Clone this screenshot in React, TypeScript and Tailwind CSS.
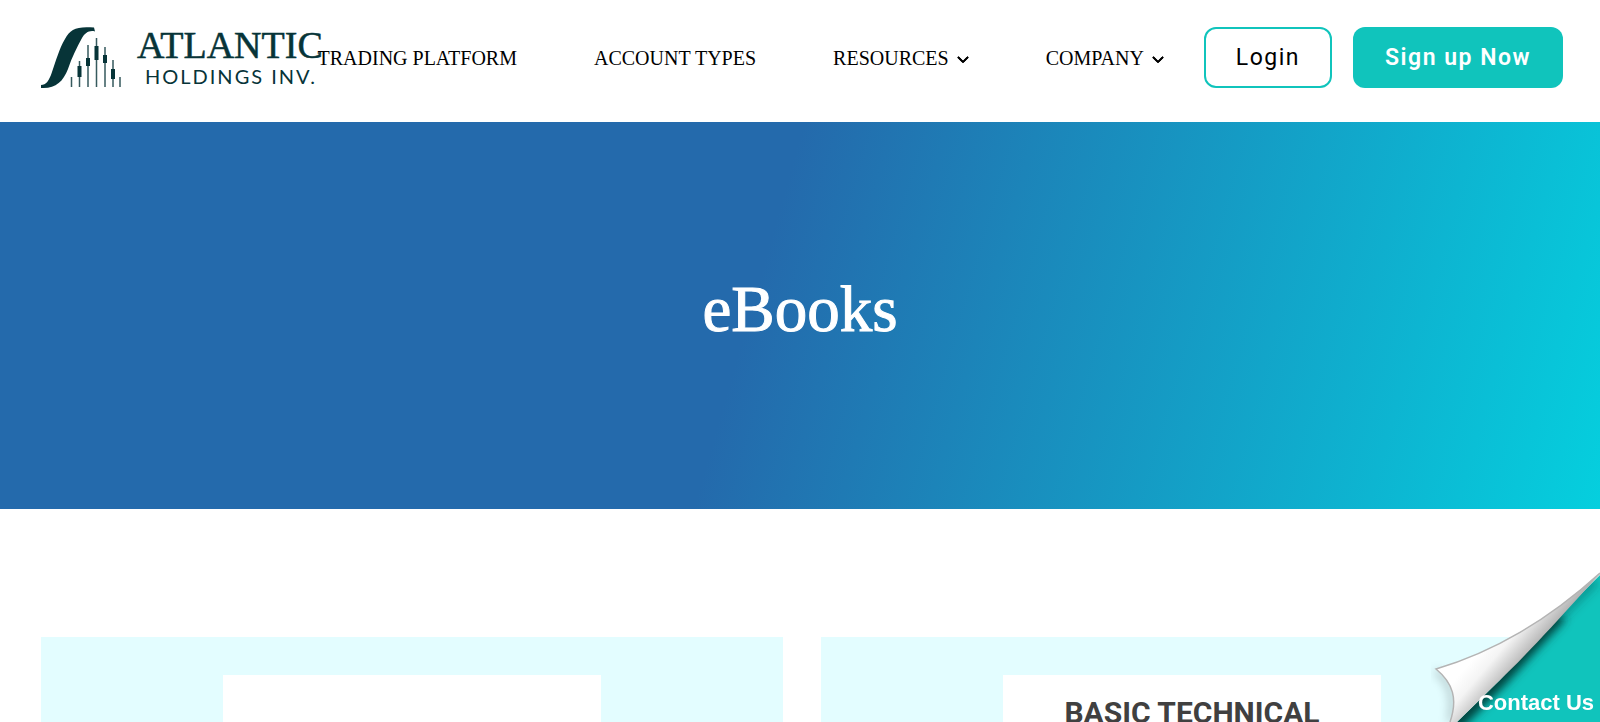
import { FaChevronDown } from "react-icons/fa6";

const navItems = [
  { label: "TRADING PLATFORM", menu: false },
  { label: "ACCOUNT TYPES", menu: false },
  { label: "RESOURCES", menu: true },
  { label: "COMPANY", menu: true },
];

const books = [
  { id: 1, title: "" },
  { id: 2, title: "BASIC TECHNICAL" },
];

function LogoMark() {
  return (
    <svg
      width="80"
      height="62"
      viewBox="0 0 80 62"
      className="shrink-0"
      aria-hidden="true"
    >
      <path
        d="M54 4.500C48 3 44 6 41 11C36 20 31 30 27 42C22 55 14 62 0 61V58C5 58 8 54 11 45C15 34 18 22 24 12C29 2 36 -1 53 0.500Z"
        fill="#073438"
      />
      <path
        d="M30.500 50V60M38.500 34V60M47 18V60M55.500 11V60M64 20V60M72 33V60M79 50V60"
        stroke="#365a5e"
        strokeWidth="1.500"
      />
      <g fill="#073438">
        <rect x="36.500" y="39" width="4" height="11" />
        <rect x="45" y="31" width="4" height="8" />
        <rect x="53.500" y="19" width="4" height="14" />
        <rect x="62" y="28" width="4" height="8" />
        <rect x="70" y="42" width="4" height="10" />
      </g>
    </svg>
  );
}

function Logo() {
  return (
    <a href="#" className="flex w-[270px] shrink-0 gap-4 text-[#073438]">
      <LogoMark />
      <span className="flex flex-col whitespace-nowrap">
        <span className="font-['Liberation_Serif',serif] text-[38px] leading-9 [-webkit-text-stroke:0.5px]">
          ATLANTIC
        </span>
        <span className="pl-2 font-['Lato',sans-serif] text-xl leading-[26px] tracking-widest">
          HOLDINGS INV.
        </span>
      </span>
    </a>
  );
}

function Header() {
  return (
    <header className="flex h-[122px] items-start pt-[27px] pr-[37px] pl-[41px]">
      <Logo />
      <nav className="ml-auto flex h-[61px] items-center gap-[77px] font-['Liberation_Serif',serif] text-xl text-black">
        {navItems.map((item) => (
          <a
            key={item.label}
            href="#"
            className="flex items-center gap-2 whitespace-nowrap"
          >
            {item.label}
            {item.menu && (
              <FaChevronDown className="mt-0.5 size-3 stroke-current stroke-[40]" />
            )}
          </a>
        ))}
      </nav>
      <div className="ml-10 flex gap-[21px] font-['Roboto',sans-serif] text-[23px] tracking-[1.5px] whitespace-nowrap">
        <button
          type="button"
          className="h-[61px] rounded-xl border-2 border-[#10c4bc] px-[30px] pt-px text-black"
        >
          Login
        </button>
        <button
          type="button"
          className="h-[61px] rounded-xl bg-[#10c4bc] px-8 pt-px font-semibold text-white"
        >
          Sign up Now
        </button>
      </div>
    </header>
  );
}

function ContactCorner() {
  return (
    <a
      href="#"
      className="fixed right-0 bottom-0 block h-[150px] w-[170px] overflow-hidden"
    >
      <svg width="170" height="150" viewBox="0 0 170 150" aria-hidden="true">
        <defs>
          <linearGradient
            id="paper"
            gradientUnits="userSpaceOnUse"
            x1="42"
            y1="88"
            x2="76"
            y2="117"
          >
            <stop offset="0" stopColor="#ffffff" />
            <stop offset="0.35" stopColor="#f4f4f4" />
            <stop offset="1" stopColor="#a8a8a8" />
          </linearGradient>
          <filter id="soft" x="-30%" y="-30%" width="160%" height="160%">
            <feGaussianBlur stdDeviation="5" />
          </filter>
          <clipPath id="under">
            <path d="M170 3L120 53L70 108L27 150H170Z" />
          </clipPath>
        </defs>
        <path
          d="M6 99C18 108 26 122 20 150"
          fill="none"
          stroke="#000000"
          strokeOpacity="0.25"
          strokeWidth="5"
          filter="url(#soft)"
        />
        <path d="M170 3L120 53L70 108L27 150H170Z" fill="#10c4bc" />
        <g clipPath="url(#under)">
          <path
            d="M130 43L100 75L70 108L20 158"
            fill="none"
            stroke="#003c38"
            strokeWidth="14"
            filter="url(#soft)"
          />
          <path
            d="M165 8L130 43"
            fill="none"
            stroke="#003c38"
            strokeOpacity="0.35"
            strokeWidth="10"
            filter="url(#soft)"
          />
        </g>
        <path
          d="M170 2C145 29 98 82 70 108L27 150H20C28 127 23 111 6 97C70 78 125 42 170 1Z"
          fill="url(#paper)"
        />
        <path
          d="M20 150C28 127 23 111 6 97C70 78 125 42 170 1"
          fill="none"
          stroke="#b4b4b4"
          strokeWidth="1.500"
        />
      </svg>
      <span className="absolute right-[6px] bottom-[3px] font-['Liberation_Sans',sans-serif] text-[22px] leading-8 font-bold text-white">
        Contact Us
      </span>
    </a>
  );
}

export default function App() {
  return (
    <div className="min-h-screen bg-white">
      <Header />
      <section className="flex h-[387px] items-center justify-center bg-[linear-gradient(106deg,#246aac_47%,#05cfde_100%)] pb-3">
        <h1 className="font-['Liberation_Serif',serif] text-[65px] leading-none text-white [-webkit-text-stroke:1px]">
          eBooks
        </h1>
      </section>
      <main className="grid grid-cols-2 gap-[38px] pt-32 pr-[37px] pl-[41px]">
        {books.map((book) => (
          <article
            key={book.id}
            className="flex justify-center bg-[#e3fdff] pt-[38px] pb-10"
          >
            <div className="h-[480px] w-[378px] bg-white pt-5 text-center">
              <h2 className="font-['Roboto',sans-serif] text-[30px] leading-9 font-bold text-[#404040]">
                {book.title}
              </h2>
            </div>
          </article>
        ))}
      </main>
      <ContactCorner />
    </div>
  );
}
